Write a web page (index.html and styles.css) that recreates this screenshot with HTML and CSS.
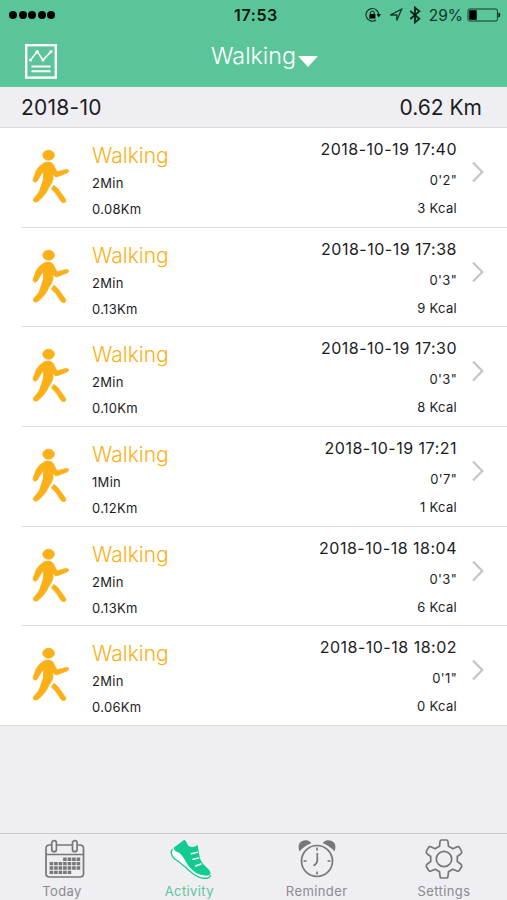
FILE: index.html
```html
<!DOCTYPE html>
<html lang="en">
<head>
    <meta charset="UTF-8">
    <meta name="viewport" content="width=device-width, initial-scale=1.0">
    <title>Activity</title>
    <link rel="stylesheet" href="styles.css">
</head>
<body>
    <svg class="sprite">
        <symbol id="walker" viewBox="0 0 40 58">
            <ellipse cx="18.6" cy="7.2" rx="5.8" ry="5"/>
            <path d="M13.5 15.2Q18 12.8 22 15.2Q23.8 16.6 24.7 19.5L27 23.8L36.5 21.4Q38.8 21.4 38.6 23.3Q38.4 24.6 36.7 25.1L27.3 28.7Q24.9 29.1 23.7 27.2L22.8 26L23 31Q22.4 34.4 19.3 38.6C17 43.5 14.3 48.5 7.4 53.7Q4.8 54.9 3.5 53Q2.7 51.2 4.3 49.8C8.6 45.5 9.8 43 11 38.5L13.5 31V24L11.4 25.9L7.2 33Q5.7 34.8 4 33.8Q2.7 32.9 3.2 31.2L6.2 22.8Q8.7 18.3 13.5 15.2Z"/>
            <path d="M24 37.2L28 40.8L35.7 51.6Q36.5 53.6 34.8 54.4Q32.6 55.2 31 53.3L26 45.6L21.4 41Z"/>
        </symbol>
        <symbol id="arrow" viewBox="0 0 14 22">
            <path d="M2 1.5L11.3 11L2 20.5"/>
        </symbol>
    </svg>

    <div class="screen">
        <div class="top">
            <div class="status">
                <div class="signal"><i></i><i></i><i></i><i></i><i></i></div>
                <div class="clock">17:53</div>
                <div class="indicators">
                    <svg class="lock" viewBox="0 0 16 16">
                        <path d="M13.6 8A6.3 6.3 0 1 0 11 12.9" fill="none" stroke="#12372a" stroke-width="1.2"/>
                        <path d="M11.5 7.3H16L13.8 10.2Z"/>
                        <rect x="4.4" y="7" width="6" height="4.6"/>
                        <path d="M5.6 7.2V5.8a1.8 1.8 0 0 1 3.6 0V7.2" fill="none" stroke="#12372a" stroke-width="1.1"/>
                    </svg>
                    <svg class="location" viewBox="0 0 14 14">
                        <path d="M1.2 7L12.6 1.2L7.8 12.4V7Z" fill="none" stroke="#12372a" stroke-width="1.3"/>
                    </svg>
                    <svg class="bluetooth" viewBox="0 0 12 18">
                        <path d="M1.3 5L10.3 12.8L6 16.4V1.6L10.3 5.2L1.3 13" fill="none" stroke="#0b241b" stroke-width="1.8"/>
                    </svg>
                    <span class="percent">29%</span>
                    <svg class="battery" viewBox="0 0 34 14">
                        <rect x="1" y="1" width="29.4" height="12" rx="1.5" fill="none" stroke="#12372a"/>
                        <rect x="2.2" y="2.2" width="7.5" height="9.6"/>
                        <path d="M31.5 4.5Q33.3 5 33.3 7T31.5 9.5Z"/>
                    </svg>
                </div>
            </div>
            <div class="nav">
                <svg class="report" viewBox="0 0 32 35">
                    <g fill="none" stroke="#fff">
                        <rect x="1.2" y="1.2" width="29.6" height="32.4" stroke-width="2.4"/>
                        <path d="M5.6 16L12.2 7.6L18 16L26 7.6" stroke-width="1.6"/>
                        <path d="M6.5 22.4H25.5M6.5 27.3H25.5" stroke-width="2"/>
                    </g>
                    <g fill="#fff">
                        <circle cx="5.6" cy="16" r="1.6"/>
                        <circle cx="12.2" cy="7.6" r="1.6"/>
                        <circle cx="18" cy="16" r="1.6"/>
                        <circle cx="26" cy="7.6" r="1.6"/>
                    </g>
                </svg>
                <div class="title">Walking</div>
                <div class="caret"></div>
            </div>
        </div>

        <div class="month">
            <span class="month-name">2018-10</span>
            <span class="month-total">0.62 Km</span>
        </div>

        <div class="list">
            <div class="row">
                <svg class="walker"><use href="#walker"/></svg>
                <div class="info">
                    <div class="name">Walking</div>
                    <div class="small">2Min</div>
                    <div class="small">0.08Km</div>
                </div>
                <div class="data">
                    <div class="date">2018-10-19 17:40</div>
                    <div class="small pace">0'2"</div>
                    <div class="small">3 Kcal</div>
                </div>
                <svg class="arrow"><use href="#arrow"/></svg>
            </div>
            <div class="row">
                <svg class="walker"><use href="#walker"/></svg>
                <div class="info">
                    <div class="name">Walking</div>
                    <div class="small">2Min</div>
                    <div class="small">0.13Km</div>
                </div>
                <div class="data">
                    <div class="date">2018-10-19 17:38</div>
                    <div class="small pace">0'3"</div>
                    <div class="small">9 Kcal</div>
                </div>
                <svg class="arrow"><use href="#arrow"/></svg>
            </div>
            <div class="row">
                <svg class="walker"><use href="#walker"/></svg>
                <div class="info">
                    <div class="name">Walking</div>
                    <div class="small">2Min</div>
                    <div class="small">0.10Km</div>
                </div>
                <div class="data">
                    <div class="date">2018-10-19 17:30</div>
                    <div class="small pace">0'3"</div>
                    <div class="small">8 Kcal</div>
                </div>
                <svg class="arrow"><use href="#arrow"/></svg>
            </div>
            <div class="row">
                <svg class="walker"><use href="#walker"/></svg>
                <div class="info">
                    <div class="name">Walking</div>
                    <div class="small">1Min</div>
                    <div class="small">0.12Km</div>
                </div>
                <div class="data">
                    <div class="date">2018-10-19 17:21</div>
                    <div class="small pace">0'7"</div>
                    <div class="small">1 Kcal</div>
                </div>
                <svg class="arrow"><use href="#arrow"/></svg>
            </div>
            <div class="row">
                <svg class="walker"><use href="#walker"/></svg>
                <div class="info">
                    <div class="name">Walking</div>
                    <div class="small">2Min</div>
                    <div class="small">0.13Km</div>
                </div>
                <div class="data">
                    <div class="date">2018-10-18 18:04</div>
                    <div class="small pace">0'3"</div>
                    <div class="small">6 Kcal</div>
                </div>
                <svg class="arrow"><use href="#arrow"/></svg>
            </div>
            <div class="row">
                <svg class="walker"><use href="#walker"/></svg>
                <div class="info">
                    <div class="name">Walking</div>
                    <div class="small">2Min</div>
                    <div class="small">0.06Km</div>
                </div>
                <div class="data">
                    <div class="date">2018-10-18 18:02</div>
                    <div class="small pace">0'1"</div>
                    <div class="small">0 Kcal</div>
                </div>
                <svg class="arrow"><use href="#arrow"/></svg>
            </div>
        </div>

        <div class="tabs">
            <div class="tab">
                <svg viewBox="-1.5 0 44 42">
                    <g fill="none" stroke="#777" stroke-width="1.7">
                        <path d="M9 7H7Q3.5 7 3.5 10.5V35.5Q3.5 39 7 39H37.5Q41 39 41 35.5V10.5Q41 7 37.5 7H35M14.5 7H29.5M3.5 16.5H41"/>
                        <rect x="9.3" y="2.7" width="4.6" height="11" rx="2.3"/>
                        <rect x="30" y="2.7" width="4.6" height="11" rx="2.3"/>
                    </g>
                    <g stroke="#777" stroke-width="3.4" stroke-dasharray="3.6 .9">
                        <path d="M20.6 21.2H37.7"/>
                        <path d="M7.1 25.6H37.7"/>
                        <path d="M7.1 30H37.7"/>
                        <path d="M7.1 34.4H28.7"/>
                    </g>
                </svg>
                <span>Today</span>
            </div>
            <div class="tab active">
                <svg viewBox="0 0 132 126">
                    <path d="M14 34C6 39 10 54 20 63C40 74 53 91 75 107Q98 124 119 120Q126 119 127 111" fill="#fff" stroke="#12cb91" stroke-width="4"/>
                    <path d="M16 30L47 7Q50 5 53 9L61 23Q75 32 89 21L94 52L98 67Q104 80 120 92Q129 101 127 108Q123 115 105 112Q84 109 68 91C52 75 48 52 30 43Q20 39 16 30Z" fill="#12cb91"/>
                    <path d="M70 47L88 43M75 64L92 60M83 84L99 78" stroke="#fff" stroke-width="4.5" stroke-linecap="round"/>
                </svg>
                <span>Activity</span>
            </div>
            <div class="tab">
                <svg viewBox="0 0 44 42">
                    <path d="M4.5 13.5Q1 3 11 2.3Q14.5 2.3 16.3 5.3Q9 8 4.5 13.5Z" fill="#777"/>
                    <path d="M39.5 13.5Q43 3 33 2.3Q29.5 2.3 27.7 5.3Q35 8 39.5 13.5Z" fill="#777"/>
                    <g fill="none" stroke="#777" stroke-width="1.7">
                        <circle cx="22" cy="23" r="15.5"/>
                        <path d="M22.3 15V22.5Q22.3 25.5 18.5 27.7M22 9.5V12.5M22 33.5V36.5M8.5 23H11.5M32.5 23H35.5"/>
                    </g>
                </svg>
                <span>Reminder</span>
            </div>
            <div class="tab">
                <svg viewBox="0 0 44 42">
                    <g fill="none" stroke="#777" stroke-width="1.7" stroke-linejoin="round">
                        <path d="M19.5 2H24.5Q25.7 2 26 3.5L26.5 8.3L31 10.8L35.2 8.8Q36.7 8.2 37.6 9.6L39.6 13.3Q40.2 14.7 39 15.7L35.3 18.5V23.5L39 26.3Q40.2 27.3 39.6 28.7L37.4 32.3Q36.5 33.6 35 33L30.8 31.2L26.5 33.7L26 38.5Q25.7 40 24.5 40H19.5Q18.3 40 18 38.5L17.5 33.7L13.2 31.2L9 33Q7.5 33.6 6.6 32.3L4.4 28.7Q3.8 27.3 5 26.3L8.7 23.5V18.5L5 15.7Q3.8 14.7 4.4 13.3L6.4 9.6Q7.3 8.2 8.8 8.8L13 10.8L17.5 8.3L18 3.5Q18.3 2 19.5 2Z"/>
                        <circle cx="22" cy="21" r="7.7"/>
                    </g>
                </svg>
                <span>Settings</span>
            </div>
        </div>
    </div>
</body>
</html>
```
FILE: styles.css
```css
*{
    box-sizing: border-box;
}
body{
    margin: 0;
    font-family: Inter, "Liberation Sans", sans-serif;
    color: #1c1c1e;
}
.sprite{
    display: none;
}
.screen{
    width: 507px;
    height: 900px;
    display: flex;
    flex-direction: column;
    background: #eeeef3;
    overflow: hidden;
}
.top{
    height: 87px;
    background: #5bc59a;
}
.status{
    height: 30px;
    display: grid;
    grid-template-columns: 1fr auto 1fr;
    align-items: center;
    padding: 0 6px 0 9px;
}
.signal{
    display: flex;
    gap: 1.6px;
}
.signal i{
    width: 8px;
    height: 8px;
    border-radius: 50%;
    background: #000;
}
.clock{
    font-size: 16px;
    font-weight: 600;
    letter-spacing: .6px;
    padding-left: 2px;
    color: #07160f;
}
.indicators{
    display: flex;
    align-items: center;
    justify-content: flex-end;
}
.lock{
    width: 16px;
    height: 16px;
    margin-right: 8px;
}
.location{
    width: 14px;
    height: 14px;
    margin-right: 6px;
}
.bluetooth{
    width: 12px;
    height: 18px;
    margin-right: 8px;
}
.percent{
    font-size: 15.5px;
    color: #12372a;
    margin-right: 4px;
}
.battery{
    width: 34px;
    height: 14px;
}
.nav{
    height: 57px;
    display: flex;
    align-items: flex-start;
    padding-left: 25px;
}
.report{
    width: 32px;
    height: 35px;
    margin-top: 14px;
}
.title{
    margin: 11px 0 0 154px;
    font-size: 23.3px;
    line-height: 30px;
    font-weight: 350;
    color: #fff;
}
.caret{
    margin: 26px 0 0 2px;
    border: 10.5px solid transparent;
    border-top: 11.5px solid #fff;
    border-bottom: 0;
}
.month{
    height: 41px;
    display: flex;
    justify-content: space-between;
    align-items: center;
    padding: 0 25px 0 21px;
    border-bottom: 1px solid #d9d9dc;
    font-size: 21px;
}
.month-name{
    letter-spacing: .25px;
}
.list{
    background: #fff;
    border-bottom: 1px solid #dcdcdf;
}
.row{
    height: 99.7px;
    display: flex;
    padding-right: 22px;
    margin-left: 22px;
    border-bottom: 1px solid #dcdcdf;
}
.row:last-child{
    height: 98.7px;
    border-bottom: 0;
}
.walker{
    width: 40px;
    height: 58px;
    margin: 20px 0 0 8px;
    fill: #fbb017;
    stroke: #fbb017;
    stroke-width: .8;
}
.info{
    margin: 14px 0 0 22px;
}
.name{
    font-size: 21px;
    line-height: 28px;
    font-weight: 350;
    color: #fbb017;
}
.small{
    font-size: 13px;
    line-height: 26px;
    letter-spacing: .3px;
}
.data{
    margin: 9px 14px 0 auto;
    text-align: right;
}
.date{
    font-size: 16px;
    line-height: 24px;
    letter-spacing: .5px;
}
.pace{
    margin-top: 6px;
    line-height: 27px;
    padding-bottom: 1px;
}
.arrow{
    width: 14px;
    height: 22px;
    margin-top: 33px;
    fill: none;
    stroke: #c6c6ca;
    stroke-width: 2.3;
}
.tabs{
    height: 67px;
    margin-top: auto;
    display: flex;
    justify-content: space-between;
    padding: 4px 18px 0 17px;
    border-top: 1px solid #c9c9cd;
}
.tab{
    width: 90px;
    display: flex;
    flex-direction: column;
    align-items: center;
    font-size: 13px;
    line-height: 18px;
    letter-spacing: .4px;
    color: #8b8b8f;
}
.tab svg{
    width: 44px;
    height: 42px;
    margin: 0 0 1.5px 1px;
}
.active{
    color: #5bc59a;
}
```
